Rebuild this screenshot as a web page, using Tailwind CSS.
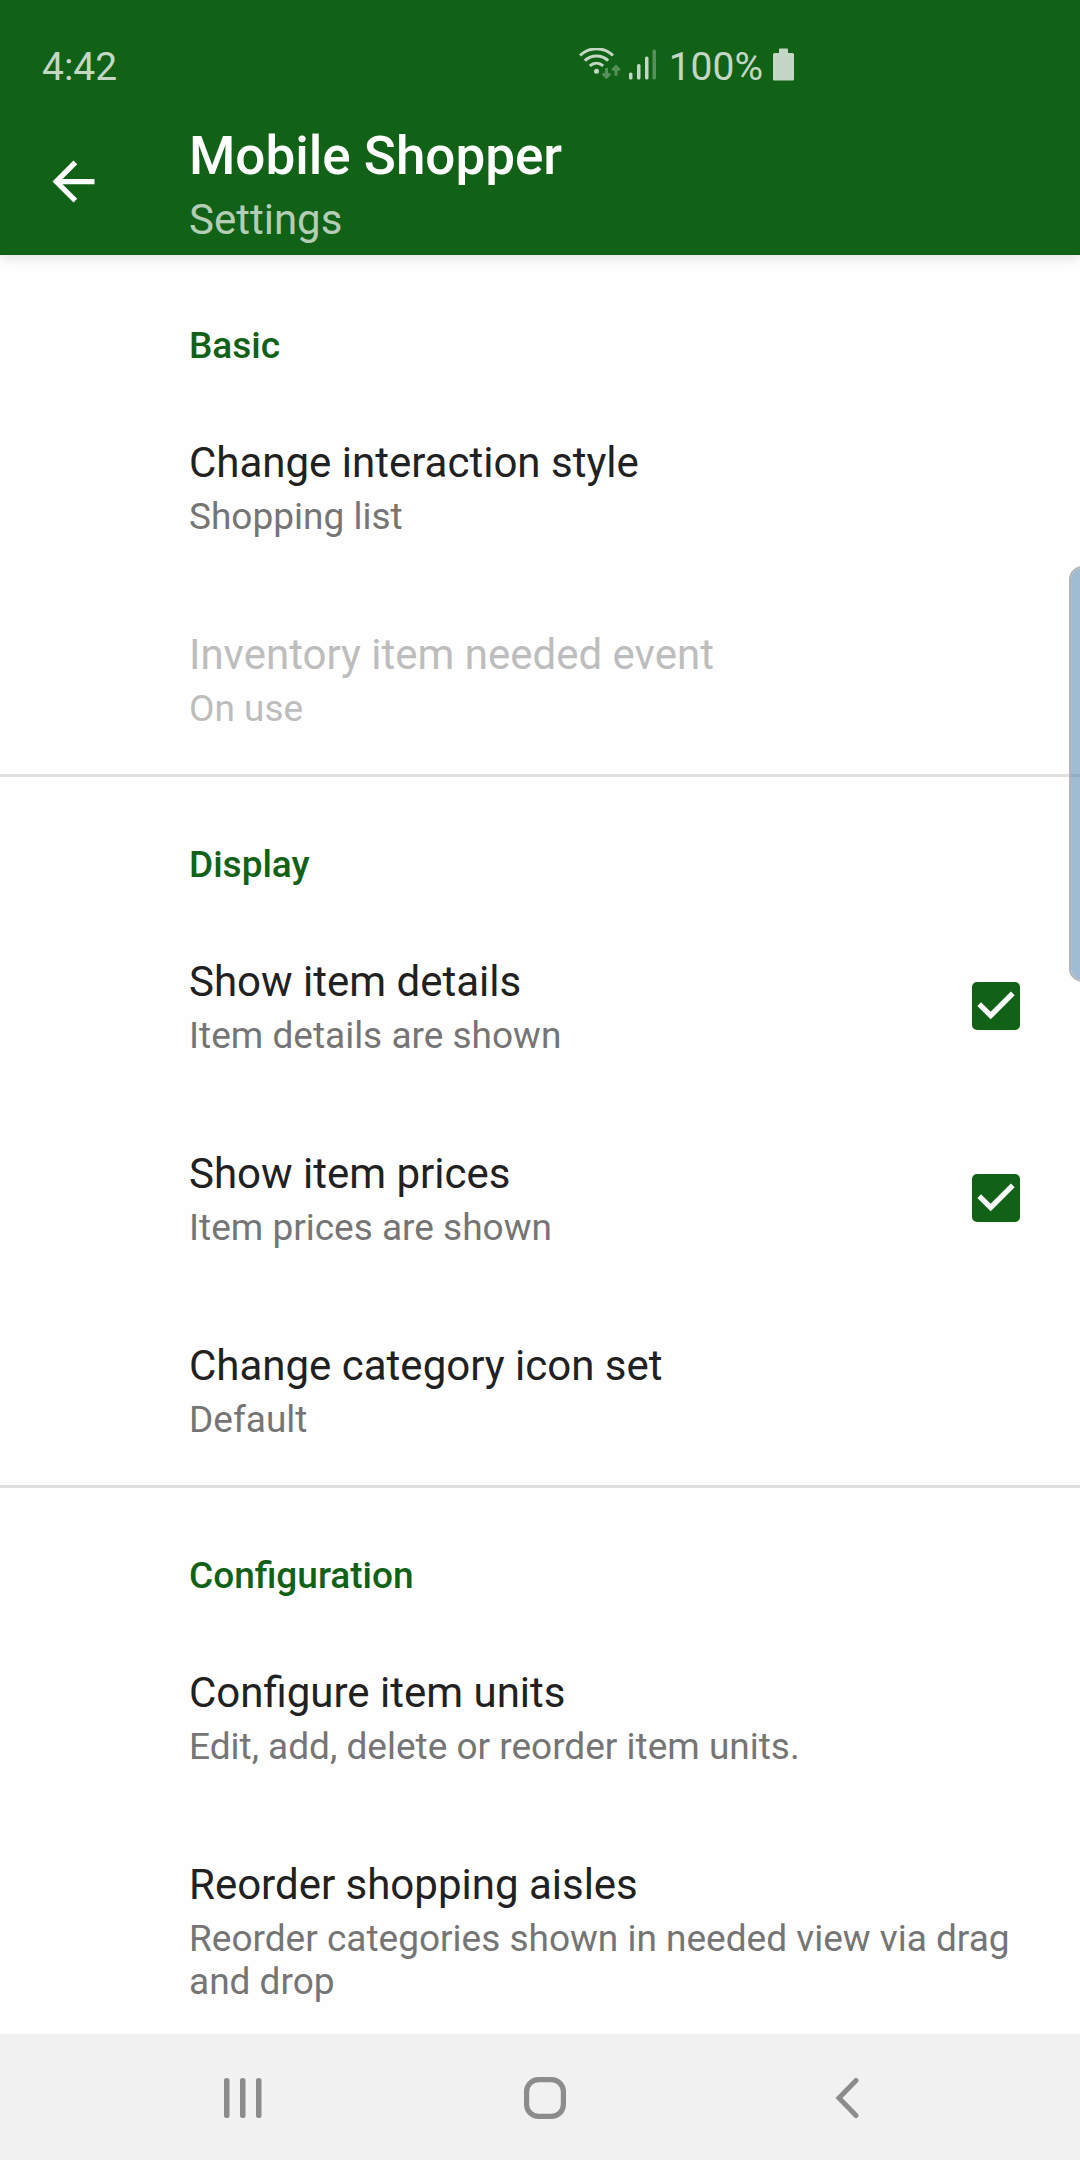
<!DOCTYPE html>
<html lang="en">
<head>
    <meta charset="UTF-8" />
    <meta name="viewport" content="width=device-width, initial-scale=1" />
    <title>Mobile Shopper - Settings</title>
    <script src="https://cdn.jsdelivr.net/npm/@tailwindcss/browser@4"></script>
</head>
<body class="relative flex h-screen flex-col overflow-hidden bg-[#fefefe] font-[Roboto,sans-serif] text-[#212121]">

    <!-- Status bar + toolbar -->
    <header class="z-10 shrink-0 bg-[#116116] shadow-[0_3px_12px_rgba(0,0,0,0.12)]">
        <div class="flex h-[108px] items-center justify-between pt-[26px] pr-[286px] pl-[42px] text-[39px] leading-[46px] text-white/75">
            <span>4:42</span>
            <div class="flex items-center">
                <!-- Wifi -->
                <svg class="mr-2 h-[38px] w-[42px]" viewBox="0 1 42 38" fill="none" stroke="currentColor" stroke-width="3">
                    <path d="M1 8.500C10.500 -0.500 24.500 -0.500 34 8.500" />
                    <path d="M5.800 13.700C12.500 7.500 22.500 7.500 29.200 13.700" />
                    <path d="M10.800 18.900C14.800 15.300 20.200 15.300 24.200 18.900" />
                    <circle cx="17.500" cy="24.300" r="2.500" fill="currentColor" stroke="none" />
                    <g class="opacity-40">
                        <path d="M27.500 21v9M23.800 26.500l3.700 3.700 3.700-3.700" />
                        <path d="M37 28.800v-9M33.300 23.300l3.700-3.700 3.700 3.700" />
                    </g>
                </svg>
                <!-- Signal -->
                <svg class="mr-3 h-[38px] w-7" viewBox="0 1 28 38" fill="currentColor">
                    <rect x="0" y="25.500" width="3.500" height="7" rx="1.500" />
                    <rect x="8" y="17" width="3.500" height="15.500" rx="1.500" />
                    <rect x="16" y="9.500" width="3.500" height="23" rx="1.500" />
                    <rect x="23.500" y="2.500" width="3.500" height="30" rx="1.500" class="opacity-40" />
                </svg>
                <span>100%</span>
                <!-- Battery -->
                <svg class="ml-[10px] h-[38px] w-[21px]" viewBox="0 1 21 38" fill="currentColor">
                    <path d="M7 1.500h7a1 1 0 0 1 1 1V6h4.500A1.500 1.500 0 0 1 21 7.500V32a1.500 1.500 0 0 1-1.500 1.500h-18A1.500 1.500 0 0 1 0 32V7.500A1.500 1.500 0 0 1 1.500 6H6V2.500a1 1 0 0 1 1-1z" />
                </svg>
            </div>
        </div>
        <div class="flex h-[147px] items-center pl-[42px]">
            <button class="mr-[84px] text-white" aria-label="Back">
                <svg class="block size-[63px]" viewBox="0 0 24 24" fill="currentColor">
                    <path d="M20 11H7.830l5.590-5.590L12 4l-8 8 8 8 1.410-1.410L7.830 13H20v-2z" />
                </svg>
            </button>
            <div class="flex flex-col gap-2 pt-1.5">
                <h1 class="text-[53px] leading-[61px] font-medium text-white">Mobile Shopper</h1>
                <p class="text-[42px] leading-[49px] text-white/70">Settings</p>
            </div>
        </div>
    </header>

    <!-- Settings list -->
    <main class="min-h-0 flex-1 overflow-y-auto [scrollbar-width:none]">
        <section class="border-t-[3px] border-transparent">
            <h2 class="pt-[66px] pb-[23px] pl-[189px] text-[37px] leading-[43px] font-medium text-[#116116]">Basic</h2>
            <button class="flex w-full flex-col gap-1 pt-[45px] pr-[60px] pb-11 pl-[189px] text-left">
                <span class="text-[42px] leading-[56px]">Change interaction style</span>
                <span class="text-[37px] leading-[43px] text-[#757575]">Shopping list</span>
            </button>
            <button class="flex w-full flex-col gap-1 pt-[45px] pr-[60px] pb-11 pl-[189px] text-left text-[#bdbdbd]" disabled>
                <span class="text-[42px] leading-[56px]">Inventory item needed event</span>
                <span class="text-[37px] leading-[43px]">On use</span>
            </button>
        </section>

        <section class="border-t-[3px] border-[#e0e0e0]">
            <h2 class="pt-[66px] pb-[23px] pl-[189px] text-[37px] leading-[43px] font-medium text-[#116116]">Display</h2>
            <label class="flex w-full items-center pt-[45px] pr-[60px] pb-11 pl-[189px]">
                <span class="flex flex-1 flex-col gap-1">
                    <span class="text-[42px] leading-[56px]">Show item details</span>
                    <span class="text-[37px] leading-[43px] text-[#757575]">Item details are shown</span>
                </span>
                <span class="grid size-12">
                    <input type="checkbox" class="peer col-start-1 row-start-1 size-12 appearance-none rounded-[5px] border-[5px] border-[#757575] checked:border-[#116116] checked:bg-[#116116]" checked />
                    <svg class="pointer-events-none invisible col-start-1 row-start-1 size-12 peer-checked:visible" viewBox="3 3 18 18" fill="#fefefe">
                        <path d="M10 17l-5-5 1.410-1.410L10 14.170l7.590-7.590L19 8l-9 9z" />
                    </svg>
                </span>
            </label>
            <label class="flex w-full items-center pt-[45px] pr-[60px] pb-11 pl-[189px]">
                <span class="flex flex-1 flex-col gap-1">
                    <span class="text-[42px] leading-[56px]">Show item prices</span>
                    <span class="text-[37px] leading-[43px] text-[#757575]">Item prices are shown</span>
                </span>
                <span class="grid size-12">
                    <input type="checkbox" class="peer col-start-1 row-start-1 size-12 appearance-none rounded-[5px] border-[5px] border-[#757575] checked:border-[#116116] checked:bg-[#116116]" checked />
                    <svg class="pointer-events-none invisible col-start-1 row-start-1 size-12 peer-checked:visible" viewBox="3 3 18 18" fill="#fefefe">
                        <path d="M10 17l-5-5 1.410-1.410L10 14.170l7.590-7.590L19 8l-9 9z" />
                    </svg>
                </span>
            </label>
            <button class="flex w-full flex-col gap-1 pt-[45px] pr-[60px] pb-11 pl-[189px] text-left">
                <span class="text-[42px] leading-[56px]">Change category icon set</span>
                <span class="text-[37px] leading-[43px] text-[#757575]">Default</span>
            </button>
        </section>

        <section class="border-t-[3px] border-[#e0e0e0]">
            <h2 class="pt-[66px] pb-[23px] pl-[189px] text-[37px] leading-[43px] font-medium text-[#116116]">Configuration</h2>
            <button class="flex w-full flex-col gap-1 pt-[45px] pr-[60px] pb-11 pl-[189px] text-left">
                <span class="text-[42px] leading-[56px]">Configure item units</span>
                <span class="text-[37px] leading-[43px] text-[#757575]">Edit, add, delete or reorder item units.</span>
            </button>
            <button class="flex w-full flex-col gap-1 pt-[45px] pr-[60px] pb-11 pl-[189px] text-left">
                <span class="text-[42px] leading-[56px]">Reorder shopping aisles</span>
                <span class="text-[37px] leading-[43px] text-[#757575]">Reorder categories shown in needed view via drag and drop</span>
            </button>
        </section>
    </main>

    <!-- Edge panel handle, half of it is off screen -->
    <div class="absolute top-[566px] -right-4 z-20 h-[416px] w-[27px] rounded-2xl border-2 border-[#b4b4b4] bg-[#4177a9]/50 bg-clip-padding"></div>

    <!-- Navigation bar -->
    <nav class="grid h-[126px] shrink-0 grid-cols-3 bg-[#f1f1f1] pt-0.5 pr-[82px] pl-[92px] text-[#8c8c8c]">
        <button class="flex items-center justify-center" aria-label="Recent apps">
            <svg class="h-[42px] w-[38px]" viewBox="0 0 38 42" fill="currentColor">
                <rect x="0" y="1" width="5.500" height="40" rx="2.500" />
                <rect x="16" y="1" width="5.500" height="40" rx="2.500" />
                <rect x="32" y="1" width="5.500" height="40" rx="2.500" />
            </svg>
        </button>
        <button class="flex items-center justify-center" aria-label="Home">
            <svg class="size-[42px]" viewBox="0 0 42 42" fill="none" stroke="currentColor" stroke-width="5.200">
                <rect x="2.600" y="2.600" width="36.800" height="36.800" rx="12" />
            </svg>
        </button>
        <button class="flex items-center justify-center" aria-label="Back">
            <svg class="h-[42px] w-6" viewBox="0 0 24 42" fill="none" stroke="currentColor" stroke-width="5" stroke-linecap="round" stroke-linejoin="miter">
                <path d="M21 3.500L4 21l17 17.500" />
            </svg>
        </button>
    </nav>

</body>
</html>
